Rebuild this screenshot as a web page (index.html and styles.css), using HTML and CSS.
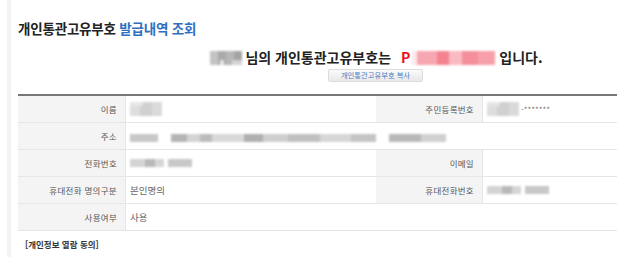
FILE: index.html
```html
<!DOCTYPE html>
<html lang="ko">
<head>
    <meta charset="UTF-8">
    <meta name="viewport" content="width=device-width, initial-scale=1.0">
    <title>개인통관고유부호 발급내역 조회</title>
    <link rel="stylesheet" href="styles.css">
</head>
<body>
    <div class="page">
        <h2 class="title">개인통관고유부호 <span class="blue">발급내역 조회</span></h2>

        <div class="notice">
            <p class="noticeText"><span class="blur blurName"></span><span class="nameSuffix">님의 개인통관고유부호는</span><span class="code">P</span><span class="blur blurCode"></span><span class="tail">입니다.</span></p>
            <button type="button" class="copyBtn">개인통관고유부호 복사</button>
        </div>

        <div class="infoTable">
            <div class="th">이름</div>
            <div class="td"><span class="blur blurShort"></span></div>
            <div class="th">주민등록번호</div>
            <div class="td"><span class="blur blurShort"></span><span class="masked">-*******</span></div>

            <div class="th">주소</div>
            <div class="td wide"><span class="blur blurAddr"></span></div>

            <div class="th">전화번호</div>
            <div class="td"><span class="blur blurPhone"></span></div>
            <div class="th">이메일</div>
            <div class="td"></div>

            <div class="th">휴대전화 명의구분</div>
            <div class="td">본인명의</div>
            <div class="th">휴대전화번호</div>
            <div class="td"><span class="blur blurPhone"></span></div>

            <div class="th">사용여부</div>
            <div class="td wide">사용</div>
        </div>

        <p class="agree">[개인정보 열람 동의]</p>
    </div>
</body>
</html>
```

FILE: styles.css
```css
body {
    margin: 0;
    font-family: "Noto Sans CJK KR", "Noto Sans", sans-serif;
    background: #fff;
}
.page {
    margin-left: 7px;
    border-left: 4px solid #f3f3f3;
    padding: 18px 18px 0 7px;
    height: 257px;
    box-sizing: border-box;
}
.title {
    margin: 0;
    font-size: 13.5px;
    line-height: 20px;
    font-weight: bold;
    color: #222;
    letter-spacing: -0.2px;
}
.blue {
    color: #2f6fc0;
}
.notice {
    margin-top: 9px;
    padding-left: 118px;
    text-align: center;
}
.noticeText {
    margin: 0;
    font-size: 14px;
    line-height: 20px;
    font-weight: bold;
    color: #222;
}
.nameSuffix {
    margin-left: 3px;
}
.code {
    color: #e8141e;
    margin-left: 10px;
    margin-right: 2px;
}
.tail {
    margin-left: 4px;
}
.copyBtn {
    margin-top: 2px;
    height: 13px;
    width: 95px;
    padding: 0;
    font-family: inherit;
    font-size: 7.3px;
    line-height: 11px;
    color: #4a7cc4;
    background: linear-gradient(#fafafa, #e9e9e9);
    border: 1px solid #dcdcdc;
    border-radius: 2px;
    display: block;
    margin-left: 192px;
}
.infoTable {
    margin-top: 12px;
    display: grid;
    grid-template-columns: 108px 250px 107px 134px;
    border-top: 2px solid #777;
}
.th, .td {
    height: 27px;
    box-sizing: border-box;
    border-bottom: 1px solid #e6e6e6;
    display: flex;
    align-items: center;
}
.th {
    background: #f4f4f4;
    justify-content: flex-end;
    padding-right: 8px;
    font-size: 8.5px;
    letter-spacing: 0.3px;
    color: #555;
    border-right: 1px solid #e6e6e6;
}
.td {
    padding-left: 4px;
    font-size: 9.5px;
    color: #666;
}
.wide {
    grid-column: span 3;
}
.masked {
    font-size: 8px;
    color: #777;
    margin-left: 2px;
}
.blur {
    display: inline-block;
    filter: blur(1px);
}
.blurName {
    width: 32px;
    height: 14px;
    vertical-align: -2px;
    background:
        linear-gradient(90deg, transparent 0 30%, #e6e6e6 30% 45%, transparent 45% 70%, #d4d4d4 70%) bottom / 100% 5px no-repeat,
        linear-gradient(90deg, #c4c4c4 0 25%, #aaa 25% 50%, #b8b8b8 50% 75%, #a4a4a4 75%);
}
.blurCode {
    width: 83px;
    height: 14px;
    vertical-align: -2px;
    background: linear-gradient(90deg, #fde9ec 0 6%, #f7a7b1 6% 30%, #f4838f 30% 45%, #f9bac2 45% 60%, #f58f9b 60% 80%, #f7a0ab 80%);
}
.blurShort {
    width: 32px;
    height: 14px;
    background:
        linear-gradient(#e6e6e6, #e6e6e6) left top / 40% 4px no-repeat,
        linear-gradient(90deg, #ddd 0 30%, #d0d0d0 30% 70%, #dadada 70%);
}
.blurAddr {
    width: 316px;
    height: 8px;
    margin-top: 3px;
    background: linear-gradient(90deg, #c8c8c8 0 9%, #fff 9% 13%, #b4b4b4 13% 18%, #d4d4d4 18% 22%, #bcbcbc 22% 26%, #d8d8d8 26% 36%, #b0b0b0 36% 42%, #cfcfcf 42% 50%, #c0c0c0 50% 60%, #d6d6d6 60% 70%, #c4c4c4 70% 78%, #fff 78% 82%, #b8b8b8 82% 92%, #d0d0d0 92%);
}
.blurPhone {
    width: 62px;
    height: 8px;
    background: linear-gradient(90deg, #d4d4d4 0 25%, #b8b8b8 25% 40%, #d6d6d6 40% 55%, #fff 55% 62%, #c8c8c8 62%);
}
.agree {
    margin: 6px 0 0 7px;
    font-size: 8.5px;
    line-height: 14px;
    font-weight: bold;
    color: #333;
}
```
